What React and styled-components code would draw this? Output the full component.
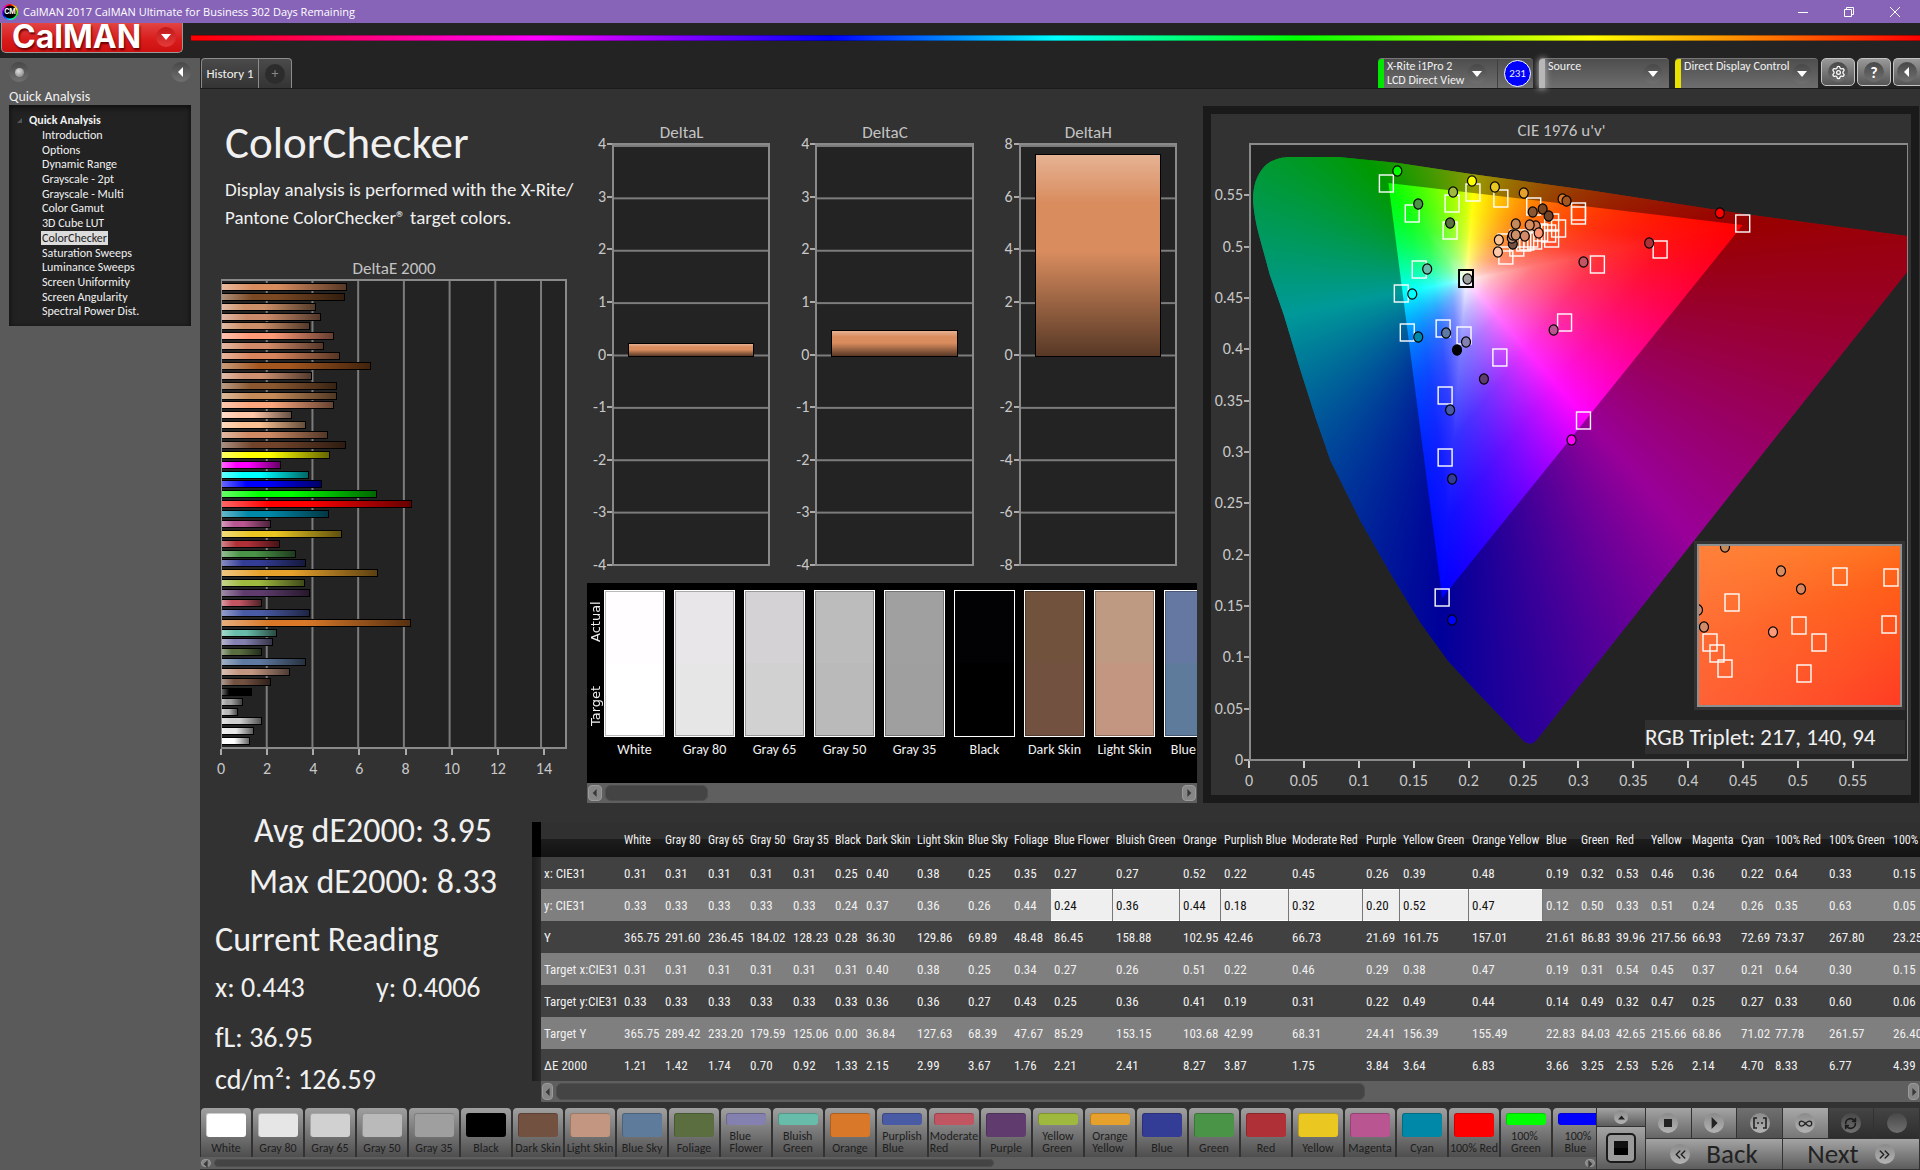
import React from "react";
import styled, { createGlobalStyle, css } from "styled-components";
import { Settings, Infinity as InfinityIcon, RefreshCw, ChevronsLeft, ChevronsRight } from "lucide-react";

const ui = `"Carlito", "Calibri", "Lato", "Open Sans", sans-serif`;
const narrow = `"Roboto Condensed", "Carlito", "Roboto", sans-serif`;

const Global = createGlobalStyle`
  * { box-sizing: border-box; }
  body { margin: 0; background: #323232; color: #f0f0f0; font-family: ${ui}; font-size: 12px; }
  button { font: inherit; color: inherit; border: 0; padding: 0; background: none; }
  h1, h2, p, ul, dl, dd, figure { margin: 0; padding: 0; font-weight: 400; }
  ul { list-style: none; }
  a { color: inherit; text-decoration: none; }
  svg { display: block; }
`;

/* ---------- data ---------- */

const pages = [
  "Introduction", "Options", "Dynamic Range", "Grayscale - 2pt", "Grayscale - Multi", "Color Gamut",
  "3D Cube LUT", "ColorChecker", "Saturation Sweeps", "Luminance Sweeps", "Screen Uniformity",
  "Screen Angularity", "Spectral Power Dist.",
];

const deltaE = [
  [5.47, "#d98c5e"], [5.36, "#7a4823"], [4.13, "#cd9068"], [4.35, "#cb8b6a"], [3.83, "#cb8e68"],
  [4.88, "#ff9a78"], [4.44, "#d38a68"], [5.17, "#d8845c"], [6.53, "#a3561f"], [3.92, "#cd9070"],
  [5.01, "#8a5730"], [5.01, "#c58a58"], [4.88, "#fba67c"], [3.05, "#ffc8a8"], [3.66, "#fcc294"],
  [4.65, "#cd8a64"], [5.43, "#70432a"], [4.74, "#ffff00"], [2.6, "#ff00ff"], [3.79, "#00ffff"],
  [4.39, "#0000ff"], [6.77, "#00ff00"], [8.33, "#ff0000"], [4.7, "#0088a8"], [2.14, "#b95692"],
  [5.26, "#ebc722"], [2.53, "#b03038"], [3.25, "#4a9448"], [3.66, "#343d96"], [6.83, "#e6a12c"],
  [3.64, "#9fb93f"], [3.84, "#5f3c6d"], [1.75, "#c25562"], [3.87, "#4a5ba5"], [8.27, "#d87828"],
  [2.41, "#67bda9"], [2.21, "#8480b0"], [1.76, "#5a6e40"], [3.67, "#5f7aa0"], [2.99, "#c39681"],
  [2.15, "#735141"], [1.33, "#000000"], [0.92, "#a0a0a0"], [0.7, "#bbbbbb"], [1.74, "#d0d0d0"],
  [1.42, "#e8e8e8"], [1.21, "#ffffff"],
];

const deltas = [
  { name: "DeltaL", ticks: [4, 3, 2, 1, 0, -1, -2, -3, -4], value: 0.25 },
  { name: "DeltaC", ticks: [4, 3, 2, 1, 0, -1, -2, -3, -4], value: 0.5 },
  { name: "DeltaH", ticks: [8, 6, 4, 2, 0, -2, -4, -6, -8], value: 7.74 },
];

const comparison = [
  ["White", "#fffdff", "#ffffff"], ["Gray 80", "#e8e6e9", "#e6e6e6"], ["Gray 65", "#d4d2d5", "#d1d1d1"],
  ["Gray 50", "#bcbcbc", "#bababa"], ["Gray 35", "#a0a0a0", "#9f9f9f"], ["Black", "#020205", "#000000"],
  ["Dark Skin", "#70523d", "#735141"], ["Light Skin", "#bf9a82", "#c39681"], ["Blue Sky", "#6578a2", "#5e7b9c"],
];

const patches = [
  ["White", "#ffffff"], ["Gray 80", "#e6e6e6"], ["Gray 65", "#d1d1d1"], ["Gray 50", "#bababa"],
  ["Gray 35", "#9f9f9f"], ["Black", "#000000"], ["Dark Skin", "#735141"], ["Light Skin", "#c39681"],
  ["Blue Sky", "#5e7b9c"], ["Foliage", "#5a6e40"], ["Blue Flower", "#8480b0"], ["Bluish Green", "#67bda9"],
  ["Orange", "#d87828"], ["Purplish Blue", "#4a5ba5"], ["Moderate Red", "#c25562"], ["Purple", "#5f3c6d"],
  ["Yellow Green", "#9fb93f"], ["Orange Yellow", "#e6a12c"], ["Blue", "#343d96"], ["Green", "#4a9448"],
  ["Red", "#b03038"], ["Yellow", "#ebc722"], ["Magenta", "#b95692"], ["Cyan", "#0088a8"],
  ["100% Red", "#ff0000"], ["100% Green", "#00ff00"], ["100% Blue", "#0000ff"],
];

const columns = [
  ["White", 41, [".31", ".33", "365.75", ".31", ".33", "365.75", "1.21"]],
  ["Gray 80", 43, [".31", ".33", "291.60", ".31", ".33", "289.42", "1.42"]],
  ["Gray 65", 42, [".31", ".33", "236.45", ".31", ".33", "233.20", "1.74"]],
  ["Gray 50", 43, [".31", ".33", "184.02", ".31", ".33", "179.59", "0.70"]],
  ["Gray 35", 42, [".31", ".33", "128.23", ".31", ".33", "125.06", "0.92"]],
  ["Black", 31, [".25", ".24", "0.28", ".31", ".33", "0.00", "1.33"]],
  ["Dark Skin", 51, [".40", ".37", "36.30", ".40", ".36", "36.84", "2.15"]],
  ["Light Skin", 51, [".38", ".36", "129.86", ".38", ".36", "127.63", "2.99"]],
  ["Blue Sky", 46, [".25", ".26", "69.89", ".25", ".27", "68.39", "3.67"]],
  ["Foliage", 40, [".35", ".44", "48.48", ".34", ".43", "47.67", "1.76"]],
  ["Blue Flower", 62, [".27", ".24", "86.45", ".27", ".25", "85.29", "2.21"]],
  ["Bluish Green", 67, [".27", ".36", "158.88", ".26", ".36", "153.15", "2.41"]],
  ["Orange", 41, [".52", ".44", "102.95", ".51", ".41", "103.68", "8.27"]],
  ["Purplish Blue", 68, [".22", ".18", "42.46", ".22", ".19", "42.99", "3.87"]],
  ["Moderate Red", 74, [".45", ".32", "66.73", ".46", ".31", "68.31", "1.75"]],
  ["Purple", 37, [".26", ".20", "21.69", ".29", ".22", "24.41", "3.84"]],
  ["Yellow Green", 69, [".39", ".52", "161.75", ".38", ".49", "156.39", "3.64"]],
  ["Orange Yellow", 74, [".48", ".47", "157.01", ".47", ".44", "155.49", "6.83"]],
  ["Blue", 35, [".19", ".12", "21.61", ".19", ".14", "22.83", "3.66"]],
  ["Green", 35, [".32", ".50", "86.83", ".31", ".49", "84.03", "3.25"]],
  ["Red", 35, [".53", ".33", "39.96", ".54", ".32", "42.65", "2.53"]],
  ["Yellow", 41, [".46", ".51", "217.56", ".45", ".47", "215.66", "5.26"]],
  ["Magenta", 49, [".36", ".24", "66.93", ".37", ".25", "68.86", "2.14"]],
  ["Cyan", 34, [".22", ".26", "72.69", ".21", ".27", "71.02", "4.70"]],
  ["100% Red", 54, [".64", ".35", "73.37", ".64", ".33", "77.78", "8.33"]],
  ["100% Green", 64, [".33", ".63", "267.80", ".30", ".60", "261.57", "6.77"]],
  ["100% Blue", 60, [".15", ".05", "23.25", ".15", ".06", "26.40", "4.39"]],
];
const rowNames = ["x: CIE31", "y: CIE31", "Y", "Target x:CIE31", "Target y:CIE31", "Target Y", "ΔE 2000"];

/* marker positions on the 659 x 614 chromaticity plane */
const targets = [
  [136, 38], [223, 47], [251, 53], [202, 58], [162, 68], [200, 85], [284, 61], [329, 66], [329, 70],
  [494, 78], [411, 104], [348, 119], [169, 124], [151, 148], [157, 187], [193, 183], [214, 190],
  [315, 177], [250, 212], [195, 250], [334, 275], [195, 312], [192, 452], [302, 77], [309, 83],
  [291, 87], [299, 88], [302, 93], [256, 110], [255, 97], [267, 102], [274, 97], [277, 96], [285, 95],
  [281, 93], [267, 93],
];
const readings = [
  [147, 26, "#00ff00"], [203, 47, "#9fb93f"], [222, 36, "#ffff00"], [245, 42, "#ebc722"],
  [274, 48, "#e6a12c"], [313, 54, "#d87828"], [317, 56, "#a3561f"], [168, 59, "#4a9448"],
  [200, 78, "#5a6e40"], [293, 64, "#7a4823"], [283, 67, "#8a5730"], [299, 71, "#70432a"],
  [266, 79, "#c58a58"], [286, 81, "#d8845c"], [280, 80, "#d98c5e"], [249, 95, "#fcc294"],
  [263, 99, "#735141"], [262, 93, "#c39681"], [263, 90, "#cd8a64"], [275, 91, "#d38a68"],
  [266, 90, "#cd9068"], [289, 88, "#ff9a78"], [248, 107, "#ffc8a8"], [400, 98, "#b03038"],
  [334, 117, "#c25562"], [471, 68, "#ff0000"], [177, 124, "#67bda9"], [162, 149, "#00ffff"],
  [168, 192, "#0088a8"], [196, 188, "#5f7aa0"], [216, 197, "#8480b0"], [207, 205, "#000000"],
  [304, 185, "#b95692"], [234, 234, "#5f3c6d"], [200, 265, "#4a5ba5"], [322, 295, "#ff00ff"],
  [202, 334, "#343d96"], [202, 475, "#0000ff"],
];
const zoomTargets = [[143, 32], [194, 33], [35, 58], [102, 81], [192, 80], [122, 98], [13, 98], [20, 109], [28, 124], [107, 129]];
const zoomReadings = [[28, 3, "#c58a58"], [84, 27, "#d98c5e"], [104, 45, "#d8845c"], [1, 66, "#cd8a64"], [7, 83, "#d38a68"], [76, 88, "#ff9a78"]];

/* ---------- shared pieces ---------- */

const RoundFace = styled.span`
  display: grid; place-items: center; flex: none;
  width: 20px; height: 20px; border-radius: 50%;
  background: linear-gradient(${p => (p.$light ? "#8a8a8a, #b4b4b4" : "#484848, #707070")});
  color: ${p => (p.$light ? "#222" : "#fff")};
`;

const Triangle = ({ dir = "down", size = 10 }) => {
  const d = { down: "M0 2H10L5 8Z", up: "M0 8H10L5 2Z", left: "M7 0V10L2 5Z", right: "M3 0V10L8 5Z" }[dir];
  return <svg width={size} height={size} viewBox="0 0 10 10"><path d={d} fill="currentColor" /></svg>;
};

const Track = styled.div`
  display: flex; align-items: stretch; gap: 3px; flex: none;
  height: ${p => p.$h}px; padding: 2px 1px; background: #5f5f5f;
`;
const Arrow = styled.button`
  flex: none; width: ${p => p.$w}px; display: grid; place-items: center;
  border-radius: 4px; background: #868686; border: 1px solid #9a9a9a; color: #383838;
`;
const Rail = styled.div`flex: 1; min-width: 0;`;
const Thumb = styled.div`
  height: 100%; border-radius: 6px; background: #444; border: 1px solid #4e4e4e;
`;
function ScrollBar({ h, thumb, arrow = 11 }) {
  return (
    <Track $h={h}>
      <Arrow $w={arrow} aria-label="Scroll left"><Triangle dir="left" size={8} /></Arrow>
      <Rail><Thumb style={{ width: thumb }} /></Rail>
      <Arrow $w={arrow} aria-label="Scroll right"><Triangle dir="right" size={8} /></Arrow>
    </Track>
  );
}

/* ---------- window frame ---------- */

const Shell = styled.div`display: flex; flex-direction: column; height: 100vh; min-height: 900px; overflow: hidden; background: #232323;`;
const TitleBar = styled.div`
  flex: none; display: flex; align-items: center; height: 23px; padding: 0 2px;
  background: #8764b8; color: #fff; font: 11px/23px "Open Sans", "Noto Sans", sans-serif;
`;
const WindowName = styled.span`flex: 1; padding-left: 5px;`;
const AppBadge = styled.span`
  display: grid; place-items: center; width: 16px; height: 16px; border-radius: 50%;
  background: radial-gradient(circle, #000 0 6px, transparent 7px), conic-gradient(red, #ff0, lime, cyan, blue, magenta, red);
  color: #fff; font: 700 7px/16px "Inter", sans-serif;
`;
const WindowButton = styled.button`width: 46px; height: 23px; display: grid; place-items: center;`;

const Header = styled.header`flex: none; display: flex; height: 35px; gap: 8px; padding-left: 1px;`;
const Logo = styled.button`
  display: flex; align-items: center; justify-content: space-between;
  width: 182px; height: 30px; padding: 0 6px 2px 10px; flex: none;
  border: 1px solid #9a9a9a; border-top: 0; border-radius: 0 0 5px 5px;
  background: linear-gradient(#e24444, #d81a1a 60%, #cc1010); color: #fff;
  font: 700 32px/28px "Inter", "Lato", sans-serif; text-shadow: 1px 2px 2px #6a0000;
`;
const LogoDrop = styled(RoundFace)`background: linear-gradient(#c01818, #e43a3a); text-shadow: none;`;
const Rainbow = styled.div`
  flex: 1; height: 6px; margin-top: 12px;
  background: linear-gradient(90deg, #f00, #f0f 20%, #00f 37%, #0ff 50%, #0f0 64%, #ff0 81%, #f00);
  border-block: 1px solid #0005;
`;

const Body = styled.div`flex: 1; min-height: 0; display: flex;`;

const Sidebar = styled.aside`flex: none; width: 200px; padding: 4px 9px; background: #5a5a5a;`;
const SideTop = styled.div`display: flex; justify-content: space-between; height: 28px;`;
const Dot = styled.span`width: 9px; height: 9px; border-radius: 50%; background: radial-gradient(circle at 40% 35%, #ddd, #777);`;
const SideTitle = styled.h2`font-size: 14px; line-height: 14px; padding-bottom: 1px;`;
const Tree = styled.nav`
  height: 221px; padding: 8px 17px 7px; background: #222; box-shadow: inset 0 2px 6px #000a;
  display: flex; flex-direction: column;
`;
const TreeRoot = styled.strong`font-size: 12px; line-height: 15px; position: relative; padding-left: 3px;`;
const Expander = styled.span`position: absolute; left: -9px; top: 5px; color: #555;`;
const TreeList = styled.ul`flex: 1; display: grid; grid-auto-rows: 1fr; padding-left: 15px;`;
const TreeLink = styled.a`
  display: inline-block; line-height: 14px; padding: 0 1px;
  ${p => p.$on && css`background: #dcdcdc; color: #222;`}
`;

const Main = styled.main`flex: 1; min-width: 0; display: flex; flex-direction: column; background: #323232;`;

const TopStrip = styled.div`
  flex: none; display: flex; justify-content: space-between; align-items: flex-end;
  height: 31px; background: #232323; border-bottom: 1px solid #1c1c1c;
`;
const Tabs = styled.div`display: flex; height: 30px; margin-left: 1px;`;
const Tab = styled.button`
  display: grid; place-items: center; width: ${p => p.$w}px; font-size: 13px;
  border: 1px solid #8c8c8c; border-width: 1px 1px 0 0; background: linear-gradient(#4a4a4a, #343434);
  &:first-child { border-left-width: 1px; border-top-left-radius: 4px; }
  &:last-child { border-top-right-radius: 4px; }
`;
const AddFace = styled(RoundFace)`background: #2c2c2c; color: #888; font-size: 14px;`;
const Tools = styled.div`display: flex; align-items: stretch; height: 30px;`;
const Device = styled.button`
  display: flex; width: ${p => p.$w}px; margin-right: ${p => (p.$last ? 3 : 6)}px;
  padding: 0 ${p => (p.$meter ? 2 : 6)}px 0 0; text-align: left;
  border-radius: 4px 4px 0 0; border-top: 1px solid #777; background: linear-gradient(#4e4e4e, #6e6e6e);
  align-items: center;
`;
const Stripe = styled.span`align-self: stretch; width: 6px; margin-right: 3px; border-top-left-radius: 4px; background: ${p => p.$c}; ${p => p.$glow && css`box-shadow: 0 0 6px 1px #aaa;`}`;
const DeviceText = styled.span`flex: 1; align-self: flex-start; font-size: 12px; line-height: 14px; white-space: pre;`;
const MeterBox = styled.span`display: flex; align-self: stretch; align-items: center; margin-left: 10px; padding-left: 6px; border-left: 1px solid #404040;`;
const Meter = styled.span`
  display: grid; place-items: center; width: 27px; height: 27px;
  border-radius: 50%; border: 1px solid #fff; background: #00f; font-size: 11px;
`;
const ToolButton = styled.button`
  display: grid; place-items: center; width: 34px; height: 28px; margin-right: 2px;
  border: 1px solid #c4c4c4; border-radius: 5px; background: linear-gradient(#999, #555);
  font-weight: 700; font-size: 16px;
  &:last-child { width: 27px; margin-right: 0; border-right: 0; border-radius: 5px 0 0 5px; }
`;

/* ---------- upper half ---------- */

const Upper = styled.section`
  flex: 1; min-height: 0; display: grid;
  grid-template-columns: minmax(0, 387fr) minmax(0, 616fr) minmax(0, 717fr);
`;
const Column = styled.div`
  display: flex; flex-direction: column; min-height: 0; min-width: 0;
  padding: ${p => p.$pad};
`;
const PageTitle = styled.h1`padding: 0 0 3px 4px; font-size: 45px; line-height: 60px;`;
const Intro = styled.p`padding-left: 4px; font-size: 19px; line-height: 28px; white-space: nowrap;`;
const ChartTitle = styled.h2`
  flex: none; font-size: 17px; line-height: 20px; text-align: center; color: #c4c4c4;
  padding-right: ${p => p.$shift || 0}px; margin-top: ${p => p.$top || 0}px;
`;
const Plot = styled.div`position: relative; min-width: 0; min-height: 0; background-color: #232323; border: 2px solid #8a8a8a;`;
const BarPlot = styled(Plot)`
  flex: 1; display: flex; flex-direction: column; padding: 1px 0;
  border-left-width: 1px;
  background-image: linear-gradient(90deg, transparent calc(100% - 2px), #7c7c7c 0);
  background-size: calc(100% / 7.5) 100%;
`;
const BarSlot = styled.div`flex: 1; display: flex; align-items: center;`;
const Bar = styled.div`
  height: 8px; border: 1px solid #000; border-left: 0;
  background: linear-gradient(90deg, #fff6, #fff0 25%, #0000 45%, #0009) ${p => p.$c};
`;
const EvenAxis = styled.div`
  flex: none; display: grid; grid-template-columns: repeat(8, 1fr);
  height: 32px; margin-left: calc(-100% / 15); width: calc(1600% / 15);
`;
const EvenTick = styled.span`
  display: flex; flex-direction: column; align-items: center; font-size: 16px; line-height: 28px; color: #c8c8c8;
  &::before { content: ""; width: 2px; height: 6px; background: #aaa; }
`;

const Deltas = styled.div`flex: 1; min-height: 0; display: grid; grid-template-columns: repeat(3, minmax(0, 1fr));`;
const DeltaChart = styled.figure`display: flex; flex-direction: column; min-height: 0;`;
const DeltaBody = styled.div`flex: 1; min-height: 0; display: grid; grid-template-columns: 25px minmax(0, 1fr) 20px;`;
const VAxis = styled.div`display: flex; flex-direction: column; justify-content: space-between; margin: -9px 0;`;
const VTick = styled.span`
  display: flex; justify-content: flex-end; align-items: center; height: 20px; font-size: 16px; line-height: 22px; color: #c8c8c8;
  &::after { content: ""; width: 5px; height: 2px; margin-left: 1px; background: ${p => (p.$blank ? "none" : "#aaa")}; }
`;
const DeltaPlot = styled(Plot)`
  display: flex; flex-direction: column; align-items: center;
  background-image: linear-gradient(#7c7c7c 2px, transparent 2px);
  background-size: 100% 12.5%;
`;
const Positive = styled.div`flex: 1; width: 82%; display: flex; flex-direction: column; justify-content: flex-end;`;
const Negative = styled.div`flex: 1;`;
const DeltaBar = styled.div`
  border: 1px solid #000; margin-bottom: -2px;
  background: linear-gradient(#fff5, #fff0 24%, #0000 48%, #0009) #d98c5e;
`;

const Compare = styled.div`flex: none; display: flex; height: 200px; margin-top: 17px; padding-top: 7px; background: #000; overflow: hidden;`;
const CompareSides = styled.div`
  flex: none; width: 17px; height: 147px; padding: 11px 0; display: flex; flex-direction: row-reverse; justify-content: space-between;
  writing-mode: vertical-rl; transform: rotate(180deg); text-align: center;
  font: 13px/17px "DejaVu Sans", sans-serif;
`;
const CompareList = styled.ul`display: flex; gap: 9px; min-width: 0;`;
const CompareItem = styled.li`flex: none; width: 61px; font-size: 14px; line-height: 26px; text-align: center; white-space: nowrap;`;
const Pair = styled.div`
  height: 147px; border: 1px solid #fff; outline: 1px solid #0004; outline-offset: -2px;
  background: linear-gradient(${p => p.$a} 50%, ${p => p.$t} 50%);
`;

const Cie = styled.figure`
  flex: 1; min-height: 0; display: grid; border: 8px solid #1a1a1a;
  grid-template-columns: 38px minmax(0, 1fr); grid-template-rows: 29px minmax(0, 1fr) 34px; padding-right: 3px;
`;
const CieTitle = styled(ChartTitle)`grid-column: 1 / -1; line-height: 33px; padding-left: 4px;`;
const CiePlot = styled(Plot)`border-width: 2px 1px 2px 2px;`;
const Plane = styled.svg`width: 100%; height: 100%;`;
const Hues = styled.div`
  width: 659px; height: 614px;
  background: conic-gradient(from 0deg at 216px 135px,
    #d0ff00 0deg, #ffff00 5deg, #ff9800 34deg, #ff0000 79deg, #ff00ff 139deg,
    #0000ff 184deg, #00ffff 259deg, #00ff00 320deg, #d0ff00 360deg);
`;
const HAxis = styled.div`grid-column: 2; display: flex; justify-content: space-between; margin: 0 -20px;`;
const HTick = styled.span`
  flex: none; width: 40px; display: flex; flex-direction: column; align-items: center;
  font-size: 16px; line-height: 25px; color: #c8c8c8;
  &::before { content: ""; width: 2px; height: 7px; background: ${p => (p.$blank ? "none" : "#ccc")}; }
`;
const Inset = styled.div`
  position: absolute; right: 2px; bottom: 49px; width: 211px; height: 169px; border: 3px solid #333; background: #333;
`;
const InsetView = styled.div`
  height: 163px; border: 2px solid #8f8f8f; overflow: hidden;
  background: linear-gradient(90deg, #ff704b88, #ff302000), linear-gradient(160deg, #ff9428, #ff6018 45%, #ff3c24);
`;
const Triplet = styled.div`
  position: absolute; right: 2px; bottom: 5px; width: 260px; font-size: 23px; line-height: 34px; background: #303030; white-space: nowrap;
`;

/* ---------- lower half ---------- */

const Lower = styled.section`flex: none; display: grid; grid-template-columns: 332px minmax(0, 1fr); padding-bottom: 6px;`;
const Stats = styled.div`padding: 0 0 1px 15px; margin-top: -2px;`;
const Summary = styled.p`padding-right: 1px; font-size: 34px; line-height: 51px; text-align: center;`;
const StatsTitle = styled.h2`margin-top: 11px; font-size: 34px; line-height: 44px;`;
const Chroma = styled.div`display: grid; grid-template-columns: 161px 1fr; font-size: 28px; line-height: 51px;`;
const Levels = styled.div`padding-top: 4px; font-size: 28px; line-height: 42px;`;

const GridWrap = styled.div`padding-top: 15px; min-width: 0; overflow: hidden;`;
const Clip = styled.div`overflow: hidden;`;
const Table = styled.table`
  border-collapse: collapse; table-layout: fixed; width: 1412px; font-family: ${narrow}; font-size: 13px; line-height: 16px;
  td, th { padding: 1px 0 0 3px; height: 32px; text-align: left; font-weight: 400; white-space: nowrap; }
`;
const HeadRow = styled.tr`
  background: linear-gradient(#303030 50%, #1c1c1c 50%, #121212);
  th { height: 35px; font-size: 12px; }
`;
const DataRow = styled.tr`background: ${p => (p.$alt ? "#7f7f7f" : "#414141")};`;
const Gutter = styled.td`background: ${p => (p.$head ? "#000" : "linear-gradient(90deg, #1c1c1c, #2a2a2a)")};`;
const Cell = styled.td`
  ${p => p.$on && css`background: #efefef; color: #111; box-shadow: inset -1px 0 0 #777, inset 0 1px 0 #fff, inset 0 -1px 0 #fff;`}
`;
const TableScroll = styled.div`padding-left: 9px;`;

/* ---------- bottom bar ---------- */

const Bottom = styled.footer`flex: none; display: flex; height: 62px; padding: 0 1px 1px 0; gap: 1px;`;
const Patches = styled.div`flex: 1; min-width: 0; display: flex; flex-direction: column;`;
const PatchRow = styled.div`height: 49px; display: flex; gap: 2px; padding-left: 1px; overflow: hidden;`;
const Patch = styled.button`
  flex: none; width: 50px; display: flex; flex-direction: column; align-items: center; justify-content: space-between;
  padding: 5px 0 3px; border-radius: 4px 4px 0 0; background: linear-gradient(#a0a0a0, #4e4e4e);
  color: #1e1e1e; font-size: 12px; line-height: 12px; text-align: left;
`;
const Chip = styled.span`
  width: 40px; height: ${p => (p.$small ? 12 : 24)}px; border-radius: 3px; background: ${p => p.$c};
  border: 1px solid #0003; border-width: 1px 0 0 1px;
`;
const PatchName = styled.span`width: ${p => (p.$wrap ? "min-content" : "auto")}; white-space: ${p => (p.$wrap ? "normal" : "nowrap")};`;
const StopColumn = styled.div`flex: none; width: 48px; display: flex; flex-direction: column; gap: 1px;`;
const metal = css`background: linear-gradient(#a4a4a4, #5c5c5c);`;
const UpButton = styled.button`height: 18px; display: grid; place-items: center; ${metal}`;
const SmallFace = styled(RoundFace)`width: 14px; height: 14px;`;
const BigStop = styled.button`flex: 1; display: grid; place-items: center; ${metal}`;
const StopFace = styled.span`
  width: 30px; height: 30px; display: grid; place-items: center; border: 2px solid #1a1a1a; border-radius: 5px; background: #9a9a9a;
  &::after { content: ""; width: 14px; height: 14px; background: linear-gradient(#111 50%, #000 50%); }
`;
const Nav = styled.div`flex: none; width: 273px; display: grid; grid-template-columns: repeat(6, 1fr); grid-template-rows: 30px 30px; gap: 1px;`;
const NavIcon = styled.button`
  display: grid; place-items: center; background: linear-gradient(${p => p.$bg});
`;
const NavStep = styled.button`
  grid-column: span 3; display: flex; align-items: center; justify-content: center; gap: 16px; ${metal}
  color: #222; font-size: 27px; line-height: 30px;
`;

/* ---------- views ---------- */

const W = [216, 135];
const prim = { r: [494, 80], g: [138, 38], b: [192, 453] };
const sectors = [[prim.r, prim.g], [prim.g, prim.b], [prim.b, prim.r]];
function foot([ax, ay], [bx, by]) {
  const dx = bx - ax, dy = by - ay;
  const t = ((W[0] - ax) * dx + (W[1] - ay) * dy) / (dx * dx + dy * dy);
  return [ax + t * dx, ay + t * dy];
}
const pts = list => list.map(p => p.join(",")).join(" ");

function Markers({ squares, dots }) {
  return (
    <g>
      {squares.map(([x, y], i) => <rect key={i} x={x - 7} y={y - 8} width="14" height="17" fill="none" stroke="#fff" strokeWidth="1.4" />)}
      {dots.map(([x, y, c], i) => <ellipse key={i} cx={x} cy={y} rx="4.5" ry="5.2" fill={c} stroke="#000" strokeWidth="1.2" />)}
    </g>
  );
}

function Chromaticity() {
  return (
    <Plane viewBox="0 0 659 614" preserveAspectRatio="none" role="img" aria-label="CIE 1976 chromaticity diagram">
      <defs>
        <clipPath id="locus">
          <path d="M88 12H40C26 12 18 17 13 22C5 31 2 42 2 56C3 68 5 79 8 90L19 130L33 170L49 223L65 273L80 316L110 376L141 430L169 476L198 516L226 546L254 575L272 594C276 599 283 600 286 596L290 591L524 296L659 127V91L488 68L345 46L221 29L148 18Z" />
        </clipPath>
        {sectors.map(([a, b], i) => {
          const f = foot(a, b);
          return (
            <linearGradient key={i} id={`white${i}`} gradientUnits="userSpaceOnUse" x1={W[0]} y1={W[1]} x2={f[0]} y2={f[1]}>
              <stop offset="0" stopColor="#fff" />
              <stop offset=".12" stopColor="#fff" stopOpacity=".7" />
              <stop offset=".25" stopColor="#fff" stopOpacity=".46" />
              <stop offset=".5" stopColor="#fff" stopOpacity=".19" />
              <stop offset=".75" stopColor="#fff" stopOpacity=".06" />
              <stop offset="1" stopColor="#fff" stopOpacity="0" />
            </linearGradient>
          );
        })}
        <mask id="outside">
          <rect width="659" height="614" fill="#fff" />
          <polygon points={pts([prim.r, prim.g, prim.b])} fill="#000" />
        </mask>
      </defs>
      <g clipPath="url(#locus)">
        <foreignObject width="659" height="614"><Hues /></foreignObject>
        <rect width="659" height="614" fill="#000" opacity=".4" mask="url(#outside)" />
      </g>
      {sectors.map(([a, b], i) => <polygon key={i} points={pts([W, a, b])} fill={`url(#white${i})`} shapeRendering="crispEdges" />)}
      <Markers squares={targets} dots={readings} />
      <rect x="209" y="125" width="14" height="17" fill="none" stroke="#000" strokeWidth="2" />
      <rect x="211" y="127" width="10" height="13" fill="none" stroke="#fff" strokeWidth="1" />
      <ellipse cx="217.5" cy="134" rx="4.5" ry="5.2" fill="#a0a0a0" stroke="#000" strokeWidth="1.2" />
    </Plane>
  );
}

const yTicks = ["", "0.55", "0.5", "0.45", "0.4", "0.35", "0.3", "0.25", "0.2", "0.15", "0.1", "0.05", "0"];
const xTicks = [...yTicks].reverse();
const cellText = v => (v.startsWith(".") ? `0${v}` : v);

export default function App() {
  return (
    <Shell>
      <Global />
      <TitleBar>
        <AppBadge>CM</AppBadge>
        <WindowName>CalMAN 2017 CalMAN Ultimate for Business 302 Days Remaining</WindowName>
        <WindowButton aria-label="Minimize"><svg width="10" height="10"><path d="M0 5.500H10" stroke="#fff" /></svg></WindowButton>
        <WindowButton aria-label="Restore"><svg width="10" height="10" fill="none" stroke="#fff"><path d="M.5 2.500H7.500V9.500H.5ZM2.500 2.500V.5H9.500V7.500H7.500" /></svg></WindowButton>
        <WindowButton aria-label="Close"><svg width="10" height="10"><path d="M0 0L10 10M10 0L0 10" stroke="#fff" /></svg></WindowButton>
      </TitleBar>
      <Header>
        <Logo>CalMAN<LogoDrop><Triangle /></LogoDrop></Logo>
        <Rainbow />
      </Header>
      <Body>
        <Sidebar>
          <SideTop>
            <RoundFace><Dot /></RoundFace>
            <RoundFace as="button" aria-label="Collapse"><Triangle dir="left" /></RoundFace>
          </SideTop>
          <SideTitle>Quick Analysis</SideTitle>
          <Tree>
            <TreeRoot><Expander><svg width="5" height="5"><path d="M5 0V5H0Z" fill="currentColor" /></svg></Expander>Quick Analysis</TreeRoot>
            <TreeList>
              {pages.map(p => <li key={p}><TreeLink href="#" $on={p === "ColorChecker"}>{p}</TreeLink></li>)}
            </TreeList>
          </Tree>
        </Sidebar>
        <Main>
          <TopStrip>
            <Tabs>
              <Tab $w={58}>History 1</Tab>
              <Tab $w={33} aria-label="Add"><AddFace>+</AddFace></Tab>
            </Tabs>
            <Tools>
              <Device $w={155} $meter>
                <Stripe $c="#00e800" /><DeviceText>{"X-Rite i1Pro 2\nLCD Direct View"}</DeviceText>
                <RoundFace><Triangle /></RoundFace><MeterBox><Meter>231</Meter></MeterBox>
              </Device>
              <Device $w={130}><Stripe $c="#b8b8b8" $glow /><DeviceText>Source</DeviceText><RoundFace><Triangle /></RoundFace></Device>
              <Device $w={143} $last><Stripe $c="#e8e000" /><DeviceText>Direct Display Control</DeviceText><RoundFace><Triangle /></RoundFace></Device>
              <ToolButton aria-label="Settings"><RoundFace><Settings size={15} /></RoundFace></ToolButton>
              <ToolButton aria-label="Help"><RoundFace>?</RoundFace></ToolButton>
              <ToolButton aria-label="Collapse"><RoundFace><Triangle dir="left" /></RoundFace></ToolButton>
            </Tools>
          </TopStrip>

          <Upper>
            <Column $pad="24px 20px 26px 21px">
              <PageTitle>ColorChecker</PageTitle>
              <Intro>Display analysis is performed with the X-Rite/<br />Pantone ColorChecker® target colors.</Intro>
              <ChartTitle $top={27}>DeltaE 2000</ChartTitle>
              <BarPlot>
                {deltaE.map(([v, c], i) => <BarSlot key={i}><Bar $c={c} style={{ width: `${(v / 15) * 100}%` }} /></BarSlot>)}
              </BarPlot>
              <EvenAxis>{[0, 2, 4, 6, 8, 10, 12, 14].map(n => <EvenTick key={n}>{n}</EvenTick>)}</EvenAxis>
            </Column>

            <Column $pad="34px 6px 4px 0">
              <Deltas>
                {deltas.map(d => (
                  <DeltaChart key={d.name}>
                    <ChartTitle $shift={14}>{d.name}</ChartTitle>
                    <DeltaBody>
                      <VAxis>{d.ticks.map(t => <VTick key={t}>{t}</VTick>)}</VAxis>
                      <DeltaPlot>
                        <Positive><DeltaBar style={{ height: `${(d.value / d.ticks[0]) * 100}%` }} /></Positive>
                        <Negative />
                      </DeltaPlot>
                    </DeltaBody>
                  </DeltaChart>
                ))}
              </Deltas>
              <Compare>
                <CompareSides><span>Actual</span><span>Target</span></CompareSides>
                <CompareList>
                  {comparison.map(([n, a, t]) => <CompareItem key={n}><Pair $a={a} $t={t} />{n}</CompareItem>)}
                </CompareList>
              </Compare>
              <ScrollBar h={20} thumb="18%" arrow={14} />
            </Column>

            <Column $pad="17px 1px 4px 0">
              <Cie>
                <CieTitle>CIE 1976 u'v'</CieTitle>
                <VAxis>{yTicks.map((t, i) => <VTick key={i} $blank={!t}>{t}</VTick>)}</VAxis>
                <CiePlot>
                  <Chromaticity />
                  <Inset>
                    <InsetView>
                      <svg width="201" height="159" viewBox="2 2 201 159"><Markers squares={zoomTargets} dots={zoomReadings} /></svg>
                    </InsetView>
                  </Inset>
                  <Triplet>RGB Triplet: 217, 140, 94</Triplet>
                </CiePlot>
                <HAxis>{xTicks.map((t, i) => <HTick key={i} $blank={!t}>{t}</HTick>)}</HAxis>
              </Cie>
            </Column>
          </Upper>

          <Lower>
            <Stats>
              <Summary>Avg dE2000: 3.95</Summary>
              <Summary>Max dE2000: 8.33</Summary>
              <StatsTitle>Current Reading</StatsTitle>
              <Chroma><span>x: 0.443</span><span>y: 0.4006</span></Chroma>
              <Levels>fL: 36.95<br />cd/m²: 126.59</Levels>
            </Stats>
            <GridWrap>
              <Clip>
                <Table>
                  <colgroup>
                    <col width="9" /><col width="80" />
                    {columns.map(([n, w]) => <col key={n} width={w} />)}
                  </colgroup>
                  <thead>
                    <HeadRow><Gutter $head /><th />{columns.map(([n]) => <th key={n} scope="col">{n}</th>)}</HeadRow>
                  </thead>
                  <tbody>
                    {rowNames.map((name, r) => (
                      <DataRow key={name} $alt={r % 2 === 1}>
                        <Gutter /><th scope="row">{name}</th>
                        {columns.map(([n, , v], c) => <Cell key={n} $on={r === 1 && c >= 10 && c <= 17}>{cellText(v[r])}</Cell>)}
                      </DataRow>
                    ))}
                  </tbody>
                </Table>
              </Clip>
              <TableScroll><ScrollBar h={21} thumb="60%" /></TableScroll>
            </GridWrap>
          </Lower>

          <Bottom>
            <Patches>
              <PatchRow>
                {patches.map(([n, c]) => {
                  const two = n.includes(" ") && !/^(Gray|Dark|Light|Blue Sky|100% Red)/.test(n);
                  return <Patch key={n}><Chip $c={c} $small={two} /><PatchName $wrap={two}>{n}</PatchName></Patch>;
                })}
              </PatchRow>
              <ScrollBar h={12} thumb="57%" arrow={10} />
            </Patches>
            <StopColumn>
              <UpButton aria-label="Up"><SmallFace $light><Triangle dir="up" size={7} /></SmallFace></UpButton>
              <BigStop aria-label="Stop"><StopFace /></BigStop>
            </StopColumn>
            <Nav>
              <NavIcon aria-label="Stop reading" $bg="#a4a4a4, #666"><RoundFace $light><svg width="8" height="8"><rect width="8" height="8" fill="#222" /></svg></RoundFace></NavIcon>
              <NavIcon aria-label="Play" $bg="#a4a4a4, #666"><RoundFace $light><Triangle dir="right" size={12} /></RoundFace></NavIcon>
              <NavIcon aria-label="Read range" $bg="#707070, #505050">
                <RoundFace $light><svg width="14" height="12" fill="none" stroke="#222" strokeWidth="1.6"><path d="M4 1H1V11H4M10 1H13V11H10M4 6H6M8 6H10" /></svg></RoundFace>
              </NavIcon>
              <NavIcon aria-label="Continuous" $bg="#a8a8a8, #777"><RoundFace $light><InfinityIcon size={15} /></RoundFace></NavIcon>
              <NavIcon aria-label="Refresh" $bg="#444, #2e2e2e"><RoundFace><RefreshCw size={13} color="#1c1c1c" strokeWidth={3} /></RoundFace></NavIcon>
              <NavIcon aria-label="Empty" $bg="#444, #2e2e2e"><RoundFace /></NavIcon>
              <NavStep><RoundFace $light><ChevronsLeft size={17} /></RoundFace>Back</NavStep>
              <NavStep>Next<RoundFace $light><ChevronsRight size={17} /></RoundFace></NavStep>
            </Nav>
          </Bottom>
        </Main>
      </Body>
    </Shell>
  );
}
